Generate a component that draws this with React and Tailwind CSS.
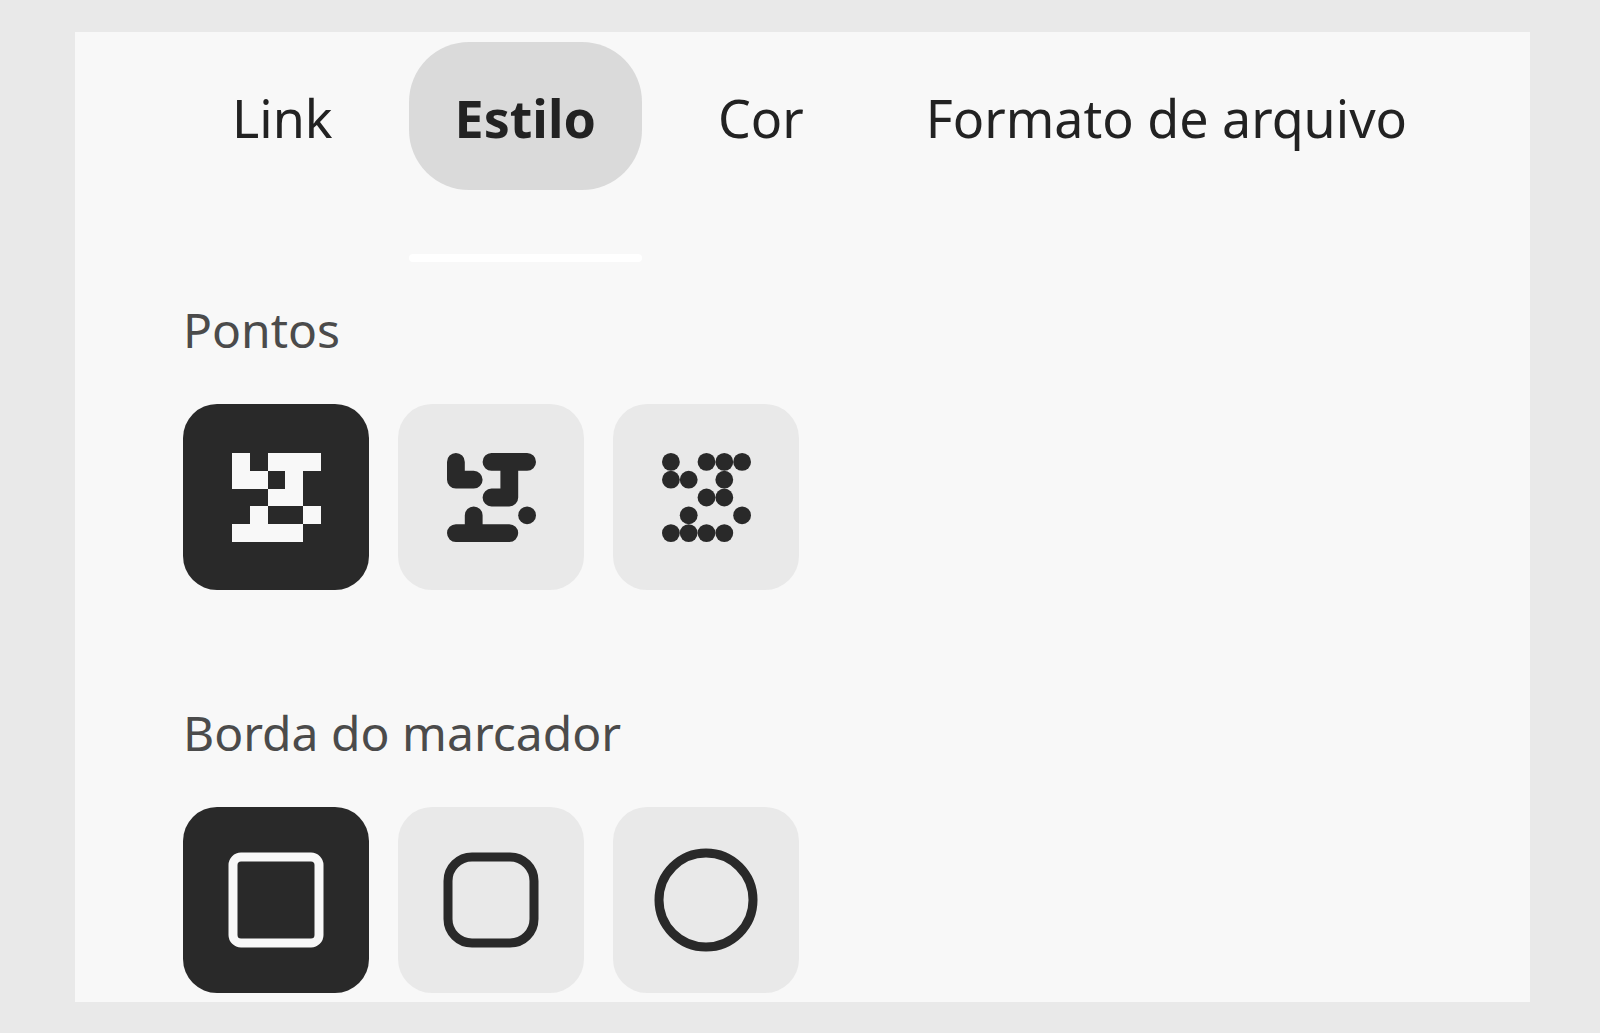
import { useState } from 'react';

const TABS = ['Link', 'Estilo', 'Cor', 'Formato de arquivo'];

// [column, row] of every filled module in the 5x5 sample
const MODULES = [
  [0, 0], [2, 0], [3, 0], [4, 0],
  [0, 1], [1, 1], [3, 1],
  [2, 2], [3, 2],
  [1, 3], [4, 3],
  [0, 4], [1, 4], [2, 4], [3, 4],
];

const SquareDots = () => (
  <svg viewBox="0 0 50 50" className="size-[89px]" fill="currentColor" shapeRendering="crispEdges">
    {MODULES.map(([x, y]) => (
      <rect key={`${x}-${y}`} x={x * 10} y={y * 10} width="10" height="10" />
    ))}
  </svg>
);

const RoundedDots = () => (
  <svg viewBox="0 0 50 50" className="size-[89px]" fill="currentColor">
    <path d="M5 0a5 5 0 0 1 5 5v5h5a5 5 0 0 1 0 10H5a5 5 0 0 1-5-5V5a5 5 0 0 1 5-5z" />
    <path d="M25 0h20a5 5 0 0 1 0 10h-5v15a5 5 0 0 1-5 5H25a5 5 0 0 1 0-10h5V10h-5a5 5 0 0 1 0-10z" />
    <path d="M15 30a5 5 0 0 1 5 5v5h15a5 5 0 0 1 0 10H5a5 5 0 0 1 0-10h5v-5a5 5 0 0 1 5-5z" />
    <circle cx="45" cy="35" r="5" />
  </svg>
);

const CircleDots = () => (
  <svg viewBox="0 0 50 50" className="size-[89px]" fill="currentColor">
    {MODULES.map(([x, y]) => (
      <circle key={`${x}-${y}`} cx={x * 10 + 5} cy={y * 10 + 5} r="5" />
    ))}
  </svg>
);

const SquareBorder = () => (
  <svg viewBox="0 0 104 104" className="size-[104px]" fill="none" stroke="currentColor" strokeWidth="9">
    <rect x="9" y="9" width="86" height="86" rx="8" />
  </svg>
);

const RoundedBorder = () => (
  <svg viewBox="0 0 104 104" className="size-[104px]" fill="none" stroke="currentColor" strokeWidth="9">
    <rect x="9" y="9" width="86" height="86" rx="24" />
  </svg>
);

const CircleBorder = () => (
  <svg viewBox="0 0 104 104" className="size-[104px]" fill="none" stroke="currentColor" strokeWidth="9">
    <circle cx="52" cy="52" r="47" />
  </svg>
);

const DOT_OPTIONS = [
  { id: 'quadrado', Icon: SquareDots },
  { id: 'arredondado', Icon: RoundedDots },
  { id: 'circular', Icon: CircleDots },
];

const BORDER_OPTIONS = [
  { id: 'quadrado', Icon: SquareBorder },
  { id: 'arredondado', Icon: RoundedBorder },
  { id: 'circular', Icon: CircleBorder },
];

const OptionGroup = ({ name, title, options }) => {
  const [selected, setSelected] = useState(options[0].id);

  return (
    <section role="radiogroup" aria-labelledby={`${name}-title`}>
      <h2 id={`${name}-title`} className="text-[48px] leading-[64px] text-[#4b4b4b]">
        {title}
      </h2>
      <div className="mt-[42px] flex gap-[29px]">
        {options.map(({ id, Icon }) => (
          <label
            key={id}
            className={`relative flex size-[186px] cursor-pointer items-center justify-center rounded-[34px] ${
              selected === id ? 'bg-[#292929] text-[#f8f8f8]' : 'bg-[#e9e9e9] text-[#292929]'
            }`}
          >
            <input
              type="radio"
              name={name}
              value={id}
              aria-label={`${title}: ${id}`}
              checked={selected === id}
              onChange={() => setSelected(id)}
              className="absolute inset-0 cursor-pointer appearance-none rounded-[34px]"
            />
            <Icon />
          </label>
        ))}
      </div>
    </section>
  );
};

const App = () => {
  const [tab, setTab] = useState('Estilo');

  return (
    <div className="min-h-screen bg-[#e9e9e9] py-8 pr-[70px] pl-[75px] font-['Noto_Sans',sans-serif]">
      <main className="bg-[#f8f8f8] pt-[10px] pb-[9px] pl-[108px]">
        <div role="tablist" className="flex gap-[30px] pl-[3px]">
          {TABS.map((name) => (
            <div key={name} className="flex flex-col gap-16">
              <button
                type="button"
                role="tab"
                aria-selected={tab === name}
                onClick={() => setTab(name)}
                className={`h-[148px] cursor-pointer rounded-[60px] px-[46px] pt-1 text-[52px] leading-[64px] whitespace-nowrap text-[#222222] ${
                  tab === name ? 'bg-[#dadada] font-bold' : ''
                }`}
              >
                {name}
              </button>
              <div className={`h-2 rounded-sm ${tab === name ? 'bg-white' : ''}`} />
            </div>
          ))}
        </div>

        <div className="mt-9 flex flex-col gap-[111px]">
          <OptionGroup name="pontos" title="Pontos" options={DOT_OPTIONS} />
          <OptionGroup name="borda" title="Borda do marcador" options={BORDER_OPTIONS} />
        </div>
      </main>
    </div>
  );
};

export default App;
